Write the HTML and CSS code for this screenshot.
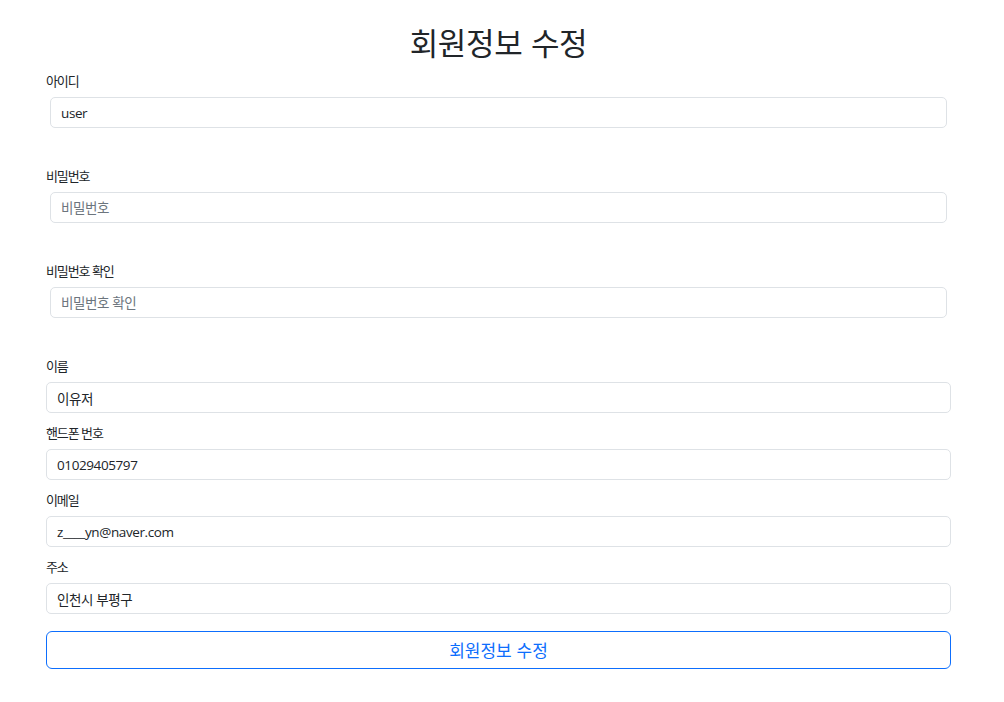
FILE: index.html
```html
<!DOCTYPE html>
<html lang="ko">
<head>
<meta charset="utf-8">
<title>회원정보 수정</title>
<link rel="stylesheet" href="styles.css">
</head>
<body>
<main class="page">
  <h2 class="title">회원정보 수정</h2>
  <form class="form">
    <div class="group">
      <label class="label">아이디</label>
      <div class="inset"><input class="field" type="text" value="user" readonly></div>
      <div class="feedback"></div>
    </div>
    <div class="group">
      <label class="label">비밀번호</label>
      <div class="inset"><input class="field" type="password" placeholder="비밀번호"></div>
      <div class="feedback"></div>
    </div>
    <div class="group">
      <label class="label">비밀번호 확인</label>
      <div class="inset"><input class="field" type="password" placeholder="비밀번호 확인"></div>
      <div class="feedback"></div>
    </div>
    <div class="group">
      <label class="label">이름</label>
      <input class="field" type="text" value="이유저">
    </div>
    <div class="group">
      <label class="label">핸드폰 번호</label>
      <input class="field" type="text" value="01029405797">
    </div>
    <div class="group">
      <label class="label">이메일</label>
      <input class="field" type="text" value="z____yn@naver.com">
    </div>
    <div class="group">
      <label class="label">주소</label>
      <input class="field" type="text" value="인천시 부평구">
    </div>
    <button class="submit" type="button">회원정보 수정</button>
  </form>
</main>
</body>
</html>
```

FILE: styles.css
```css
* { box-sizing: border-box; }

html, body {
  margin: 0;
  background: #ffffff;
}

body {
  font-family: "Open Sans", "Noto Sans CJK KR", sans-serif;
  color: #212529;
}

.page {
  width: 905px;
  margin-left: 46px;
  padding-top: 24px;
}

.title {
  margin: 0 0 12px;
  font-family: "Noto Sans CJK KR", sans-serif;
  font-size: 31px;
  font-weight: 400;
  line-height: 36px;
  letter-spacing: -0.3px;
  text-align: center;
  color: #212529;
}

.form {
  display: flex;
  flex-direction: column;
}

.group {
  display: flex;
  flex-direction: column;
  margin-bottom: 11px;
}

.label {
  display: block;
  margin-bottom: 7px;
  font-family: "Noto Sans CJK KR", sans-serif;
  font-size: 13px;
  line-height: 18px;
  letter-spacing: -1.1px;
  color: #212529;
}

.inset {
  padding: 0 4px;
}

.feedback {
  height: 28px;
}

.field {
  display: block;
  width: 100%;
  height: 31px;
  margin: 0;
  padding: 4px 10px;
  font-family: "Open Sans", "Noto Sans CJK KR", sans-serif;
  font-size: 13.5px;
  line-height: 21px;
  letter-spacing: -0.4px;
  color: #212529;
  background: #ffffff;
  border: 1px solid #dee2e6;
  border-radius: 5px;
  outline: none;
}

.field::placeholder {
  color: #6c757d;
  opacity: 1;
}

.submit {
  display: block;
  width: 100%;
  height: 38px;
  margin-top: 6px;
  padding: 0 12px;
  font-family: "Noto Sans CJK KR", sans-serif;
  font-size: 17px;
  line-height: 24px;
  color: #0d6efd;
  background: #ffffff;
  border: 1px solid #0d6efd;
  border-radius: 6px;
  cursor: pointer;
}
```
